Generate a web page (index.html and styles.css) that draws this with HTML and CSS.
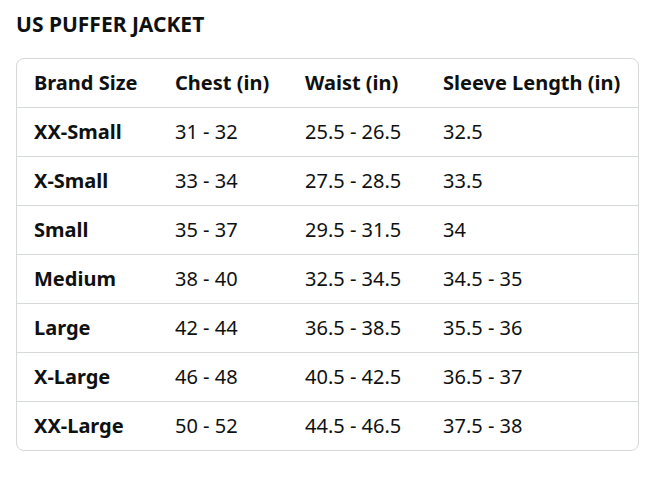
FILE: index.html
```html
<!DOCTYPE html>
<html>
<head>
<meta charset="utf-8">
<link rel="stylesheet" href="styles.css">
</head>
<body>
<div class="page">
  <h2 class="title">US PUFFER JACKET</h2>
  <div class="card">
    <table class="chart">
      <colgroup>
        <col class="c1"><col class="c2"><col class="c3"><col class="c4">
      </colgroup>
      <thead>
        <tr><th>Brand Size</th><th>Chest (in)</th><th>Waist (in)</th><th>Sleeve Length (in)</th></tr>
      </thead>
      <tbody>
        <tr><th>XX-Small</th><td>31 - 32</td><td>25.5 - 26.5</td><td>32.5</td></tr>
        <tr><th>X-Small</th><td>33 - 34</td><td>27.5 - 28.5</td><td>33.5</td></tr>
        <tr><th>Small</th><td>35 - 37</td><td>29.5 - 31.5</td><td>34</td></tr>
        <tr><th>Medium</th><td>38 - 40</td><td>32.5 - 34.5</td><td>34.5 - 35</td></tr>
        <tr><th>Large</th><td>42 - 44</td><td>36.5 - 38.5</td><td>35.5 - 36</td></tr>
        <tr><th>X-Large</th><td>46 - 48</td><td>40.5 - 42.5</td><td>36.5 - 37</td></tr>
        <tr><th>XX-Large</th><td>50 - 52</td><td>44.5 - 46.5</td><td>37.5 - 38</td></tr>
      </tbody>
    </table>
  </div>
</div>
</body>
</html>
```
FILE: styles.css
```css
html, body {
  margin: 0;
  padding: 0;
  background: #ffffff;
}
body {
  font-family: "Noto Sans", "Liberation Sans", sans-serif;
  color: #0f1111;
}
.page {
  padding: 11px 27px 0 16px;
}
.title {
  margin: 0;
  font-size: 21px;
  font-weight: 700;
  line-height: 27px;
  letter-spacing: 0;
}
.card {
  margin-top: 20px;
  border: 1px solid #d5d9d9;
  border-radius: 8px;
  overflow: hidden;
}
.chart {
  width: 100%;
  border-collapse: separate;
  border-spacing: 0;
  table-layout: fixed;
  font-size: 20px;
}
.c1 { width: 141px; }
.c2 { width: 130px; }
.c3 { width: 138px; }
.c4 { width: auto; }
.chart th, .chart td {
  text-align: left;
  padding: 0 0 0 17px;
  height: 48px;
  line-height: 24px;
  border-bottom: 1px solid #d5d9d9;
  white-space: nowrap;
}
.chart th { font-weight: 700; }
.chart td { font-weight: 400; }
.chart tbody tr:last-child th,
.chart tbody tr:last-child td {
  border-bottom: none;
}
```
